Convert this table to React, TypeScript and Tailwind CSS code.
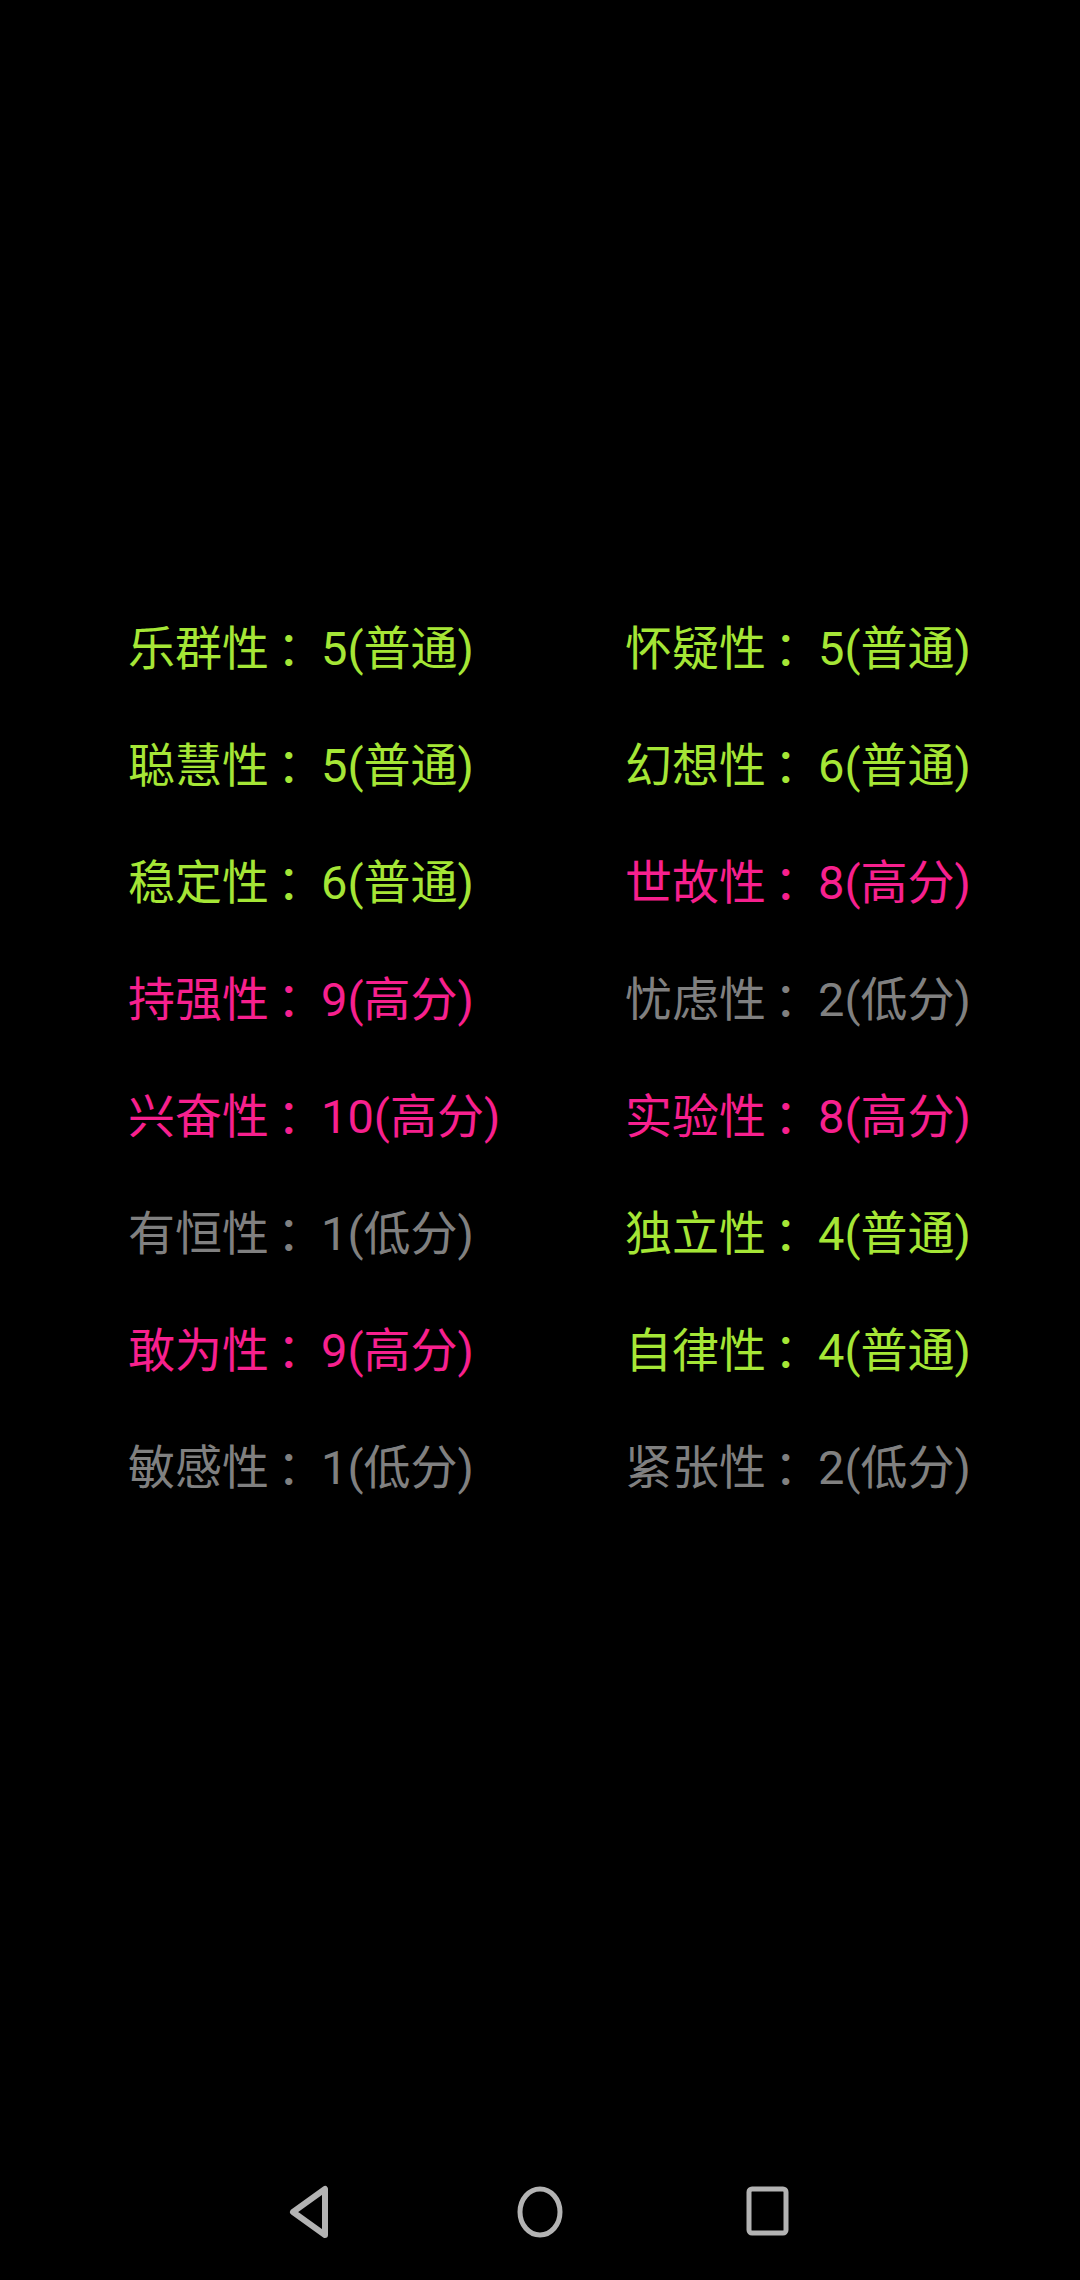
import React from "react";

type Item = { label: string; value: string; tone: "g" | "p" | "n" };

const rows: [Item, Item][] = [
  [{ label: "乐群性", value: "5(普通)", tone: "g" }, { label: "怀疑性", value: "5(普通)", tone: "g" }],
  [{ label: "聪慧性", value: "5(普通)", tone: "g" }, { label: "幻想性", value: "6(普通)", tone: "g" }],
  [{ label: "稳定性", value: "6(普通)", tone: "g" }, { label: "世故性", value: "8(高分)", tone: "p" }],
  [{ label: "持强性", value: "9(高分)", tone: "p" }, { label: "忧虑性", value: "2(低分)", tone: "n" }],
  [{ label: "兴奋性", value: "10(高分)", tone: "p" }, { label: "实验性", value: "8(高分)", tone: "p" }],
  [{ label: "有恒性", value: "1(低分)", tone: "n" }, { label: "独立性", value: "4(普通)", tone: "g" }],
  [{ label: "敢为性", value: "9(高分)", tone: "p" }, { label: "自律性", value: "4(普通)", tone: "g" }],
  [{ label: "敏感性", value: "1(低分)", tone: "n" }, { label: "紧张性", value: "2(低分)", tone: "n" }],
];

const toneClass = {
  g: "text-[#a5e636]",
  p: "text-[#f7208e]",
  n: "text-[#808080]",
};

function Cell({ item }: { item: Item }) {
  return (
    <div className={`h-[117px] flex items-center text-[47px] leading-none whitespace-nowrap ${toneClass[item.tone]}`}>
      <span>{item.label}</span>
      <span className="inline-block w-[52px] pl-[8px]">：</span>
      <span>{item.value}</span>
    </div>
  );
}

export default function App() {
  return (
    <div
      className="w-[1080px] h-[2280px] bg-black flex flex-col"
      style={{ fontFamily: "Roboto, 'Noto Sans CJK SC', sans-serif" }}
    >
      <div className="flex-1 pt-[590px] pl-[128px]">
        <div className="grid grid-cols-[497px_1fr]">
          {rows.map(([a, b], i) => (
            <React.Fragment key={i}>
              <Cell item={a} />
              <Cell item={b} />
            </React.Fragment>
          ))}
        </div>
      </div>
      <div className="h-[132px] flex items-center justify-center gap-[180px] pt-[4px] pb-[8px]">
        <svg width="48" height="56" viewBox="0 0 48 56" fill="none" stroke="#b3b3b3" strokeWidth="6" strokeLinejoin="round">
          <path d="M37 5 L37 51 L5 28 Z" />
        </svg>
        <svg width="48" height="56" viewBox="0 0 48 56" fill="none" stroke="#b3b3b3" strokeWidth="5">
          <ellipse cx="24" cy="28" rx="20" ry="23" />
        </svg>
        <svg width="48" height="56" viewBox="0 0 48 56" fill="none" stroke="#b3b3b3" strokeWidth="5">
          <rect x="5" y="5" width="37" height="44" rx="3" />
        </svg>
      </div>
    </div>
  );
}
